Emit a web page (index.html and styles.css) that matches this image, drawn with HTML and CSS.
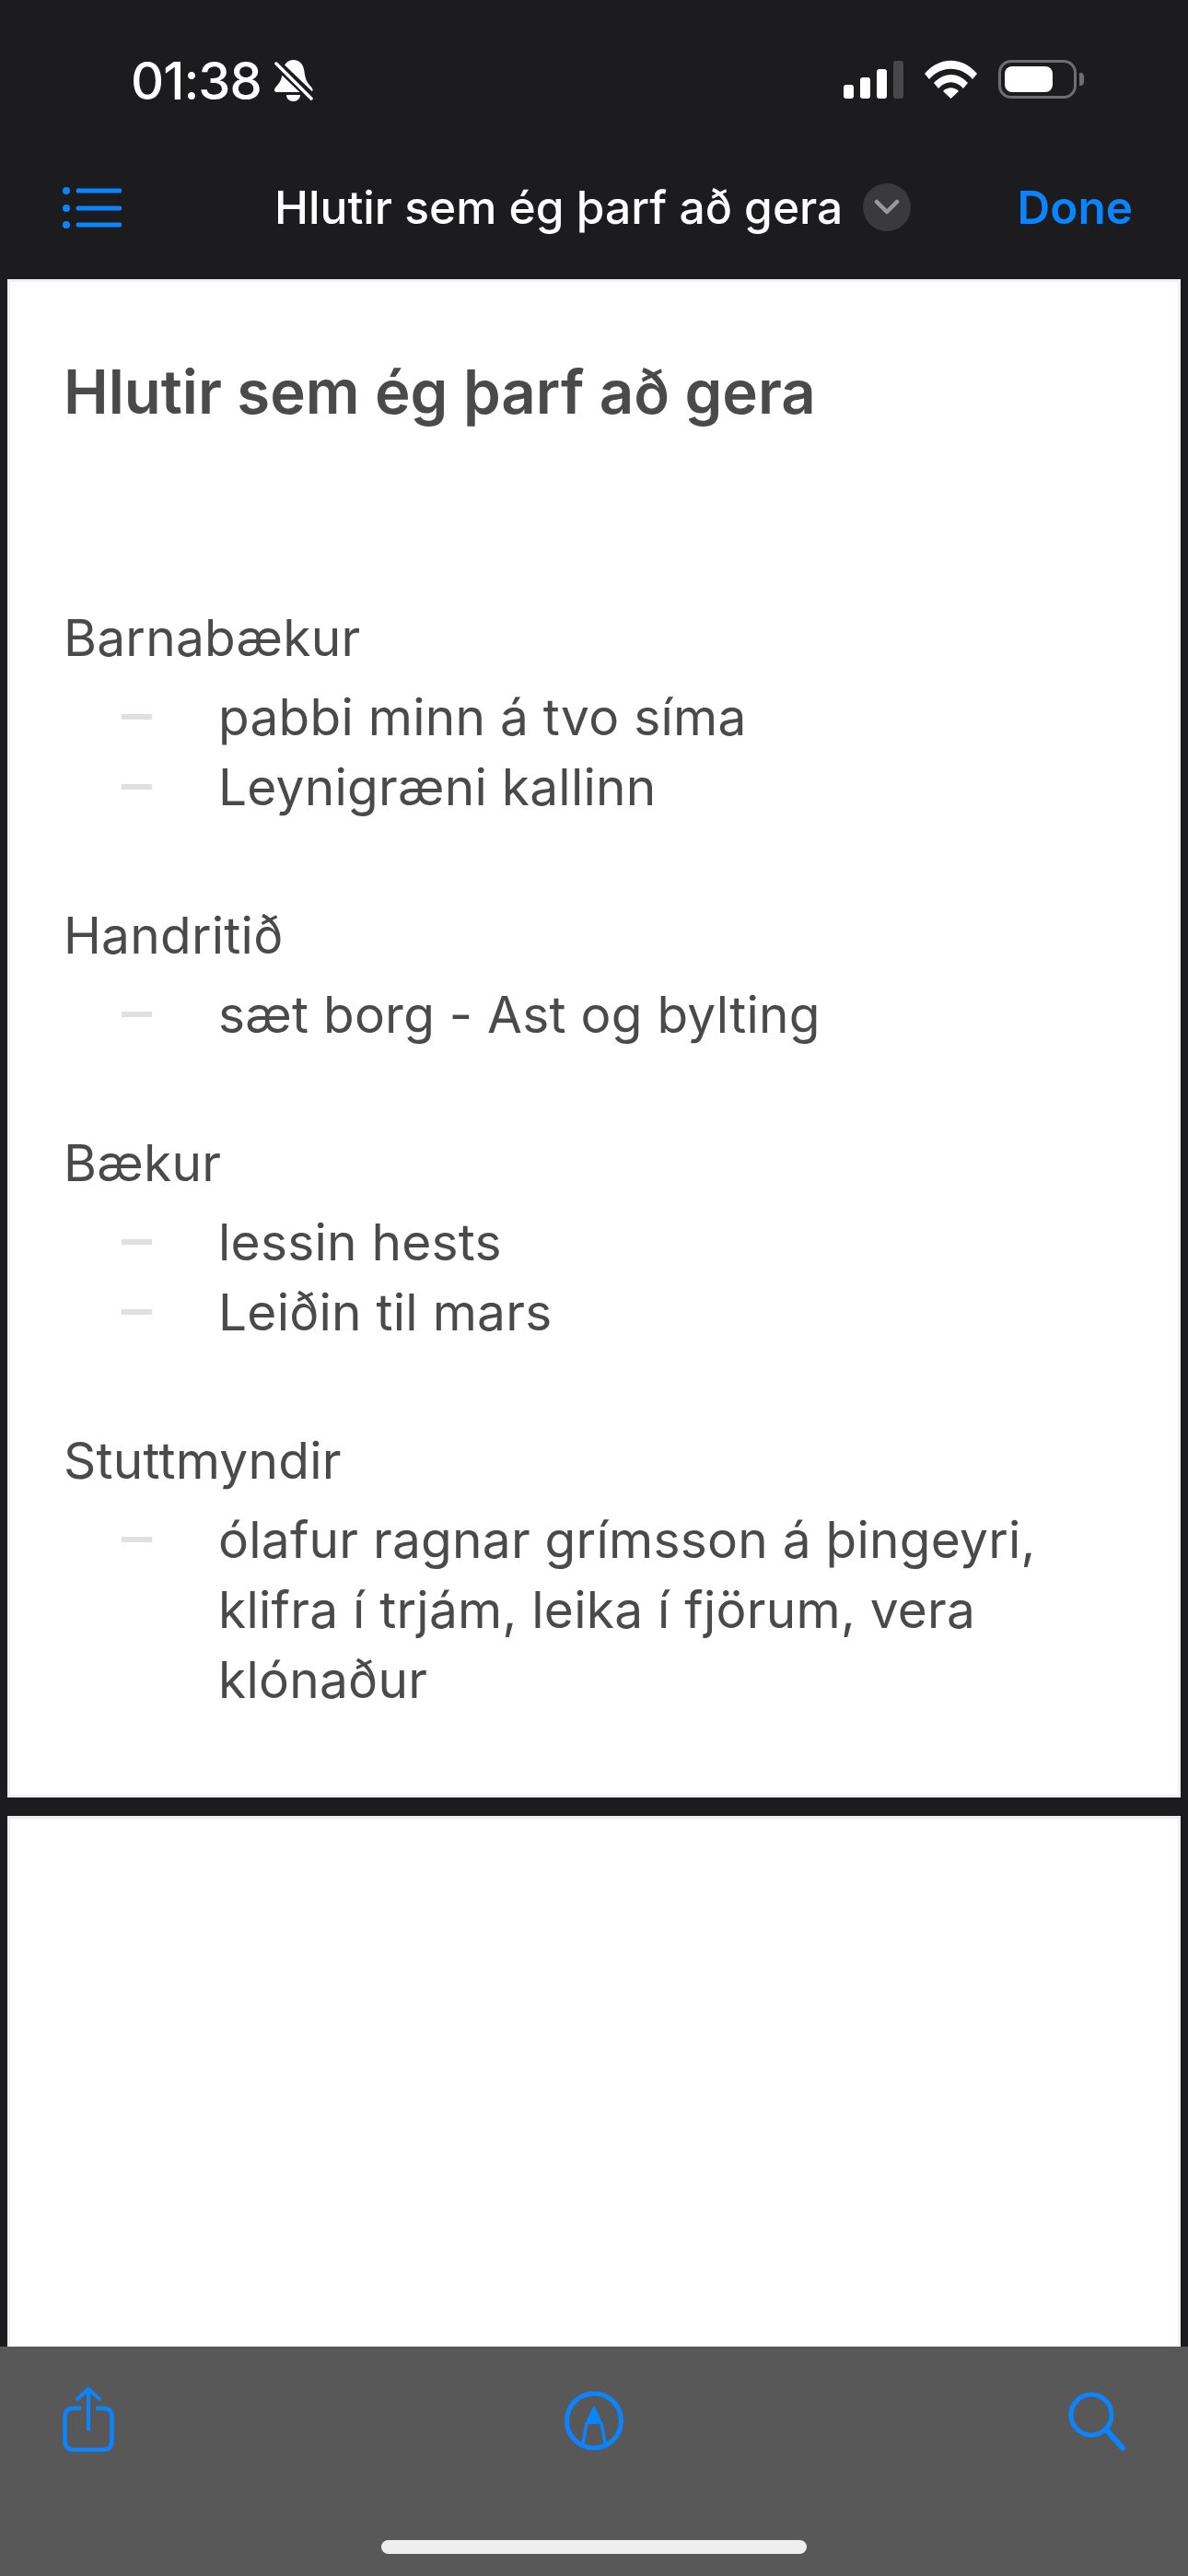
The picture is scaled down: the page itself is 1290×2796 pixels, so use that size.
FILE: index.html
```html
<!DOCTYPE html>
<html>
	<head>
		<meta charset="utf-8">
		<title>Hlutir sem ég þarf að gera</title>
		<link rel="stylesheet" href="styles.css">
	</head>
	<body>
		<div class="status">
			<div class="status-left">
				<span class="time">01:38</span>
				<svg class="bell" width="42" height="46" viewBox="0 0 42 46">
					<path d="M20.500 0c7 0 11 5 12 13 1 7 2 11 8 17 2 3 1 5-2 5H3c-3 0-4-2-2-5 6-6 7-10 8-17C10 5 14 0 20.500 0zM13 38h15c0 4-3 7-7.500 7S13 42 13 38z" fill="#fff"/>
					<path d="M-2 0l47 45" stroke="#1c1c1e" stroke-width="10"/>
					<path d="M2 4l38 38" stroke="#fff" stroke-width="3.500" stroke-linecap="round"/>
				</svg>
			</div>
			<div class="status-right">
				<svg width="65" height="41" viewBox="0 0 65 41">
					<rect x="0" y="26" width="11" height="15" rx="3" fill="#fff"/>
					<rect x="18" y="18" width="11" height="23" rx="3" fill="#fff"/>
					<rect x="36" y="9" width="11" height="32" rx="3" fill="#fff"/>
					<rect x="54" y="0" width="11" height="41" rx="3" fill="#48484a"/>
				</svg>
				<svg width="57" height="42" viewBox="0 0 57 42">
					<path d="M0 15C16-4 41-4 57 15l-5 6C39 6 18 6 5 21z" fill="#fff"/>
					<path d="M10 25c11-12 26-12 37 0l-5 6c-8-9-19-9-27 0z" fill="#fff"/>
					<path d="M20 34c5-5 12-5 17 0l-8.500 8z" fill="#fff"/>
				</svg>
				<div class="battery">
					<div class="battery-body"><div class="battery-fill"></div></div>
					<div class="battery-nub"></div>
				</div>
			</div>
		</div>

		<div class="nav">
			<svg class="list-icon" width="64" height="45" viewBox="0 0 64 45">
				<circle cx="4" cy="4" r="4" fill="#0a84ff"/>
				<circle cx="4" cy="23" r="4" fill="#0a84ff"/>
				<circle cx="4" cy="41" r="4" fill="#0a84ff"/>
				<path d="M17 4h45M17 23h45M17 41h45" stroke="#0a84ff" stroke-width="5" stroke-linecap="round"/>
			</svg>
			<div class="nav-title">
				<span>Hlutir sem ég þarf að gera</span>
				<div class="chevron">
					<svg width="28" height="18" viewBox="0 0 28 18">
						<path d="M3 3l11 11L25 3" fill="none" stroke="#9a9a9f" stroke-width="4.500" stroke-linecap="round" stroke-linejoin="round"/>
					</svg>
				</div>
			</div>
			<span class="done">Done</span>
		</div>

		<div class="pages">
			<div class="page page-first">
				<h1>Hlutir sem ég þarf að gera</h1>

				<div class="group">
					<p>Barnabækur</p>
					<ul>
						<li><i class="dash"></i><span>pabbi minn á tvo síma</span></li>
						<li><i class="dash"></i><span>Leynigræni kallinn</span></li>
					</ul>
				</div>

				<div class="group">
					<p>Handritið</p>
					<ul>
						<li><i class="dash"></i><span>sæt borg - Ast og bylting</span></li>
					</ul>
				</div>

				<div class="group">
					<p>Bækur</p>
					<ul>
						<li><i class="dash"></i><span>lessin hests</span></li>
						<li><i class="dash"></i><span>Leiðin til mars</span></li>
					</ul>
				</div>

				<div class="group">
					<p>Stuttmyndir</p>
					<ul>
						<li><i class="dash"></i><span>ólafur ragnar grímsson á þingeyri, klifra í trjám, leika í fjörum, vera klónaður</span></li>
					</ul>
				</div>
			</div>
			<div class="page page-second"></div>
		</div>

		<div class="toolbar">
			<div class="tools">
				<svg width="56" height="73" viewBox="0 0 56 73">
					<path d="M20 23h-8C6 23 2.500 26 2.500 32v26c0 7 3.500 10 9.500 10h32c6 0 9.500-3 9.500-10V32c0-6-3.500-9-9.500-9h-8" fill="none" stroke="#0a84ff" stroke-width="4.500"/>
					<path d="M28 3v43" stroke="#0a84ff" stroke-width="4" stroke-linecap="round"/>
					<path d="M16 13L28 2l12 11" fill="none" stroke="#0a84ff" stroke-width="4" stroke-linecap="round" stroke-linejoin="round"/>
				</svg>
				<svg width="64" height="65" viewBox="0 0 64 65">
					<circle cx="32" cy="32.500" r="29.500" fill="none" stroke="#0a84ff" stroke-width="5"/>
					<path d="M24 35l-4.500 24M40 35l4.500 24" fill="none" stroke="#0a84ff" stroke-width="3.500"/>
					<path d="M32 17c1 0 1.500 1 2 2l7.500 17h-19L30 19c.5-1 1-2 2-2z" fill="#0a84ff"/>
				</svg>
				<svg class="tool-search" width="62" height="64" viewBox="0 0 62 64">
					<circle cx="25" cy="25" r="22" fill="none" stroke="#0a84ff" stroke-width="5"/>
					<path d="M41 41l18 20" stroke="#0a84ff" stroke-width="6" stroke-linecap="round"/>
				</svg>
			</div>
			<div class="home-bar"></div>
		</div>
	</body>
</html>
```

FILE: styles.css
```css
* {
	box-sizing: border-box;
}

html,
body {
	margin: 0;
	padding: 0;
}

body {
	display: flex;
	flex-direction: column;
	width: 1290px;
	height: 2796px;
	overflow: hidden;
	background: #1c1c1e;
	font-family: Inter, "Liberation Sans", sans-serif;
}

.status {
	display: flex;
	justify-content: space-between;
	align-items: flex-start;
	height: 145px;
	padding: 65px 113px 0 142px;
}

.status-left {
	display: flex;
	align-items: center;
	gap: 14px;
}

.time {
	color: #fff;
	font-size: 56px;
	font-weight: 500;
	line-height: 44px;
	letter-spacing: -1px;
}

.status-right {
	display: flex;
	align-items: center;
	gap: 23px;
}

.battery {
	display: flex;
	align-items: center;
	gap: 3px;
}

.battery-body {
	width: 85px;
	height: 42px;
	padding: 4px;
	border: 3px solid #6e6e70;
	border-radius: 14px;
}

.battery-fill {
	width: 52px;
	height: 100%;
	background: #fff;
	border-radius: 8px;
}

.battery-nub {
	width: 5px;
	height: 14px;
	background: #6e6e70;
	border-radius: 0 4px 4px 0;
}

.nav {
	display: flex;
	align-items: center;
	height: 158px;
	padding: 2px 60px 0 68px;
}

.nav-title {
	display: flex;
	align-items: center;
	gap: 22px;
	margin-left: 166px;
	color: #fff;
	font-size: 49.700px;
	font-weight: 500;
}

.chevron {
	display: flex;
	align-items: center;
	justify-content: center;
	width: 52px;
	height: 52px;
	background: #3a3a3c;
	border-radius: 50%;
}

.done {
	margin-left: auto;
	color: #0a84ff;
	font-size: 49.500px;
	font-weight: 600;
}

.pages {
	display: flex;
	flex-direction: column;
	gap: 20px;
	flex: 1;
	padding: 0 8px;
}

.page {
	background: #fff;
	border: 3px solid #f0f0f0;
}

.page-first {
	height: 1648px;
	padding: 75px 58px 0;
	color: #4a4a4a;
	font-size: 55px;
	line-height: 76px;
	letter-spacing: 0.250px;
}

.page-second {
	flex: 1;
	border-bottom: 0;
}

h1 {
	margin: 0 0 183px;
	font-size: 65.300px;
	font-weight: 600;
	line-height: 90px;
	letter-spacing: 0;
}

.group {
	margin-bottom: 85px;
}

.group p {
	margin: 0 0 10px;
}

ul {
	margin: 0;
	padding: 0;
	list-style: none;
}

li {
	display: flex;
}

.dash {
	flex: none;
	width: 33px;
	height: 6px;
	margin: 35px 72px 0 63px;
	background: #e0e0e0;
}

.toolbar {
	height: 249px;
	padding-top: 44px;
	background: #585858;
}

.tools {
	display: grid;
	grid-template-columns: 1fr auto 1fr;
	align-items: center;
	height: 73px;
	padding: 0 68px;
}

.tool-search {
	justify-self: end;
}

.home-bar {
	width: 462px;
	height: 15px;
	margin: 93px auto 0;
	background: #eee;
	border-radius: 8px;
}
```
